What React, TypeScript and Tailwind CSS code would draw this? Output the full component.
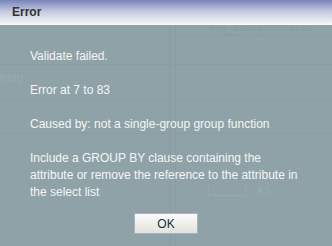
import React from 'react';

const lines = [
  'Validate failed.',
  'Error at 7 to 83',
  'Caused by: not a single-group group function',
];

// faint screen behind the translucent overlay
const Backdrop = () => (
  <div className="absolute inset-0 pointer-events-none">
    <div className="absolute left-[170px] top-[25px] bottom-0 w-[6px] border-x border-[#899ca2]" />
    <div className="absolute left-[176px] right-0 top-[35px] h-px bg-[#899ca2]" />
    <div className="absolute inset-x-0 top-[64px] h-[70px] flex flex-col justify-between">
      <div className="h-px bg-[#8a9da3]" />
      <div className="h-px bg-[#8a9da3]" />
      <div className="h-px bg-[#8a9da3]" />
    </div>
    <div className="absolute left-[210px] top-[18px] text-[12px] text-[#8a9ca3] whitespace-nowrap">
      AN_study.view.nod
    </div>
    <div className="absolute left-0 top-[69px] text-[12px] text-[#98aab0]">tring</div>
    <div className="absolute left-[208px] top-[186px] w-[38px] h-[10px] border-x border-b border-[#97a9af]" />
    <div className="absolute left-[257px] top-[183px] text-[10px] text-[#98aab0]">AS</div>
  </div>
);

const ErrorDialog = () => {
  return (
    <div
      className="relative w-[332px] h-[246px] overflow-hidden bg-[#8fa2a8]"
      style={{ fontFamily: '"Liberation Sans", Arial, sans-serif' }}
    >
      <Backdrop />

      {/* header */}
      <div className="relative h-[25px] bg-gradient-to-b from-[#7884ba] via-[#c8cde1] to-[#f3f4f7] border-b border-[#fbfbfc] flex items-center pl-[12px]">
        <span className="text-[12px] font-bold text-[#333333] leading-none">Error</span>
      </div>

      {/* message */}
      <div className="relative pl-[30px] pt-[23px] text-[12px] leading-[17px] text-[#f4f6f6] flex flex-col gap-[17px]">
        {lines.map((line) => (
          <p key={line}>{line}</p>
        ))}
        <p>
          Include a GROUP BY clause containing the
          <br />
          attribute or remove the reference to the attribute in
          <br />
          the select list
        </p>
      </div>

      <div className="relative flex justify-center mt-[12px]">
        <button className="w-[64px] h-[21px] border border-[#a7b1c8] bg-gradient-to-b from-[#fbfbf9] to-[#e3e3dc] text-[12px] text-[#10303a] leading-none">
          OK
        </button>
      </div>
    </div>
  );
};

export default function App() {
  return <ErrorDialog />;
}
